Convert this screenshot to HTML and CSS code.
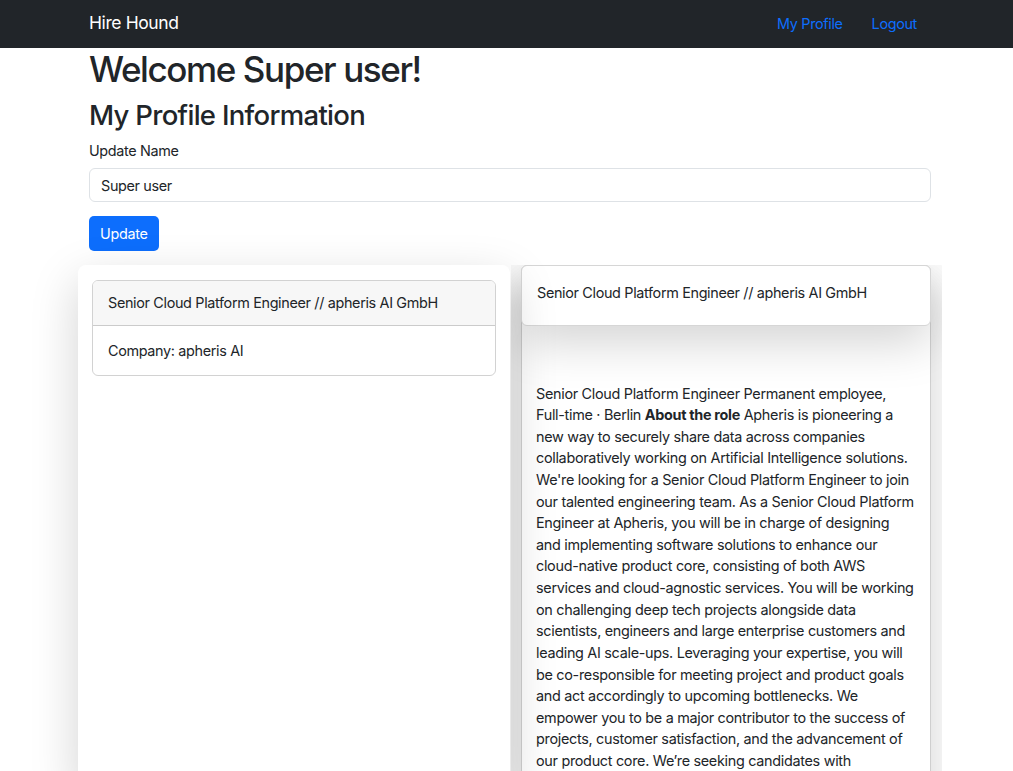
FILE: index.html
```html
<!DOCTYPE html>
<html lang="en">
<head>
<meta charset="utf-8">
<title>Hire Hound</title>
<link rel="stylesheet" href="styles.css">
</head>
<body>
<nav class="navbar">
  <div class="nav-inner">
    <a class="brand" href="#">Hire Hound</a>
    <div class="nav-links">
      <a href="#">My Profile</a>
      <a href="#">Logout</a>
    </div>
  </div>
</nav>
<main class="container">
  <h1 class="title">Welcome Super user!</h1>
  <h2 class="subtitle">My Profile Information</h2>
  <form class="profile-form">
    <label class="label" for="name">Update Name</label>
    <input class="input" id="name" type="text" value="Super user">
    <button class="btn" type="button">Update</button>
  </form>
</main>
<section class="jobs">
  <div class="list-panel">
    <div class="job-card">
      <div class="job-header">Senior Cloud Platform Engineer // apheris AI GmbH</div>
      <div class="job-body">Company: apheris AI</div>
    </div>
  </div>
  <div class="detail-col">
    <div class="detail-card">
      <div class="detail-head">Senior Cloud Platform Engineer // apheris AI GmbH</div>
      <div class="detail-text">Senior Cloud Platform Engineer Permanent employee, Full-time · Berlin <strong>About the role</strong> Apheris is pioneering a new way to securely share data across companies collaboratively working on Artificial Intelligence solutions. We're looking for a Senior Cloud Platform Engineer to join our talented engineering team. As a Senior Cloud Platform Engineer at Apheris, you will be in charge of designing and implementing software solutions to enhance our cloud-native product core, consisting of both AWS services and cloud-agnostic services. You will be working on challenging deep tech projects alongside data scientists, engineers and large enterprise customers and leading AI scale-ups. Leveraging your expertise, you will be co-responsible for meeting project and product goals and act accordingly to upcoming bottlenecks. We empower you to be a major contributor to the success of projects, customer satisfaction, and the advancement of our product core. We’re seeking candidates with experience in building and operating cloud infrastructure at scale.</div>
    </div>
  </div>
</section>
</body>
</html>
```

FILE: styles.css
```css
* { box-sizing: border-box; }
html, body { margin: 0; padding: 0; }
body {
  font-family: Inter, "Liberation Sans", sans-serif;
  font-size: 14.4px;
  line-height: 1.5;
  letter-spacing: -0.3px;
  color: #212529;
  background: #fff;
  height: 771px;
  overflow: hidden;
}
.navbar {
  background: #212529;
  height: 48px;
}
.nav-inner {
  margin: 0 96px 0 89px;
  height: 48px;
  display: flex;
  align-items: center;
  justify-content: space-between;
}
.brand {
  color: #fff;
  text-decoration: none;
  font-size: 17.5px;
  letter-spacing: -0.4px;
  margin-top: -1px;
}
.nav-links { display: flex; gap: 29px; margin-top: -1px; }
.nav-links a {
  color: #0d6efd;
  text-decoration: none;
  font-size: 14.4px;
  letter-spacing: -0.34px;
}
.container {
  margin: 0 82px 0 89px;
}
.title {
  font-size: 35px;
  font-weight: 500;
  line-height: 42px;
  margin: 0 0 9px;
  letter-spacing: -1.4px;
}
.subtitle {
  font-size: 27.5px;
  font-weight: 500;
  line-height: 33px;
  margin: 0 0 8px;
  letter-spacing: -0.7px;
}
.profile-form { display: flex; flex-direction: column; align-items: flex-start; }
.label { margin-bottom: 7px; line-height: 21px; letter-spacing: -0.34px; }
.input {
  width: 100%;
  height: 34px;
  border: 1px solid #dee2e6;
  border-radius: 6px;
  padding: 0 11px;
  font: inherit;
  letter-spacing: -0.34px;
  color: #212529;
  margin-bottom: 14px;
}
.btn {
  background: #0d6efd;
  color: #fff;
  border: none;
  border-radius: 5px;
  height: 35px;
  padding: 0 11px;
  font: inherit;
  letter-spacing: -0.3px;
}
.jobs {
  display: flex;
  margin: 14px 0 0 78px;
  align-items: flex-start;
}
.list-panel {
  width: 432px;
  height: 520px;
  background: #fff;
  border-radius: 8px;
  box-shadow: 0 16px 48px rgba(0,0,0,.175);
  padding: 15px 14px;
  position: relative;
  z-index: 1;
}
.job-card {
  border: 1px solid rgba(0,0,0,.175);
  border-radius: 6px;
  overflow: hidden;
  letter-spacing: -0.34px;
}
.job-header {
  background: #f7f7f7;
  border-bottom: 1px solid rgba(0,0,0,.175);
  padding: 11px 15px;
}
.job-body { padding: 14px 15px; }
.detail-col {
  width: 431px;
  margin-left: 1px;
  height: 520px;
  overflow: hidden;
  padding: 0 11px 0 10px;
}
.detail-card {
  border: 1px solid #cfcfcf;
  border-radius: 6px;
  background: #fff;
  box-shadow: 0 16px 48px rgba(0,0,0,.175);
  height: 560px;
}
.detail-head {
  margin: -1px -1px 0;
  border: 1px solid #d6d6d6;
  border-radius: 6px;
  background: #fff;
  box-shadow: 0 16px 48px rgba(0,0,0,.175);
  padding: 16px 15px 21px;
  letter-spacing: -0.34px;
}
.detail-text {
  padding: 57px 15px 0 14px;
}
.detail-text strong { font-weight: 700; }
```
